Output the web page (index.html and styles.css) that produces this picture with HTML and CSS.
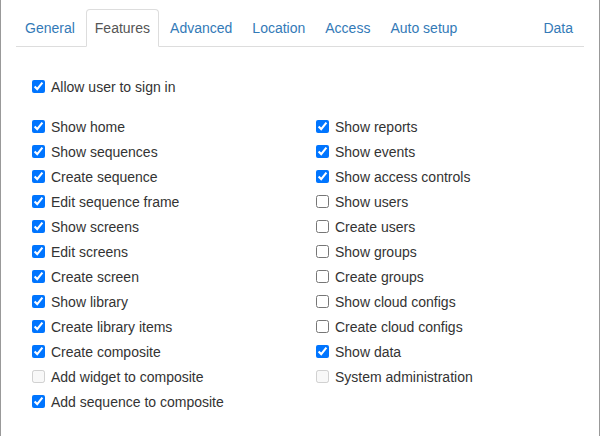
FILE: index.html
```html
<!DOCTYPE html>
<html>
<head>
<meta charset="utf-8">
<link rel="stylesheet" href="styles.css">
</head>
<body>
<div class="frame">
  <ul class="tabs">
    <li class="tab"><a href="#">General</a></li>
    <li class="tab active"><a href="#">Features</a></li>
    <li class="tab"><a href="#">Advanced</a></li>
    <li class="tab"><a href="#">Location</a></li>
    <li class="tab"><a href="#">Access</a></li>
    <li class="tab"><a href="#">Auto setup</a></li>
    <li class="tab tab-right"><a href="#">Data</a></li>
  </ul>
  <div class="content">
    <label class="row top-row"><input type="checkbox" checked><span>Allow user to sign in</span></label>
    <div class="grid">
      <div class="col">
        <label class="row"><input type="checkbox" checked><span>Show home</span></label>
        <label class="row"><input type="checkbox" checked><span>Show sequences</span></label>
        <label class="row"><input type="checkbox" checked><span>Create sequence</span></label>
        <label class="row"><input type="checkbox" checked><span>Edit sequence frame</span></label>
        <label class="row"><input type="checkbox" checked><span>Show screens</span></label>
        <label class="row"><input type="checkbox" checked><span>Edit screens</span></label>
        <label class="row"><input type="checkbox" checked><span>Create screen</span></label>
        <label class="row"><input type="checkbox" checked><span>Show library</span></label>
        <label class="row"><input type="checkbox" checked><span>Create library items</span></label>
        <label class="row"><input type="checkbox" checked><span>Create composite</span></label>
        <label class="row"><input type="checkbox" disabled><span>Add widget to composite</span></label>
        <label class="row"><input type="checkbox" checked><span>Add sequence to composite</span></label>
      </div>
      <div class="col">
        <label class="row"><input type="checkbox" checked><span>Show reports</span></label>
        <label class="row"><input type="checkbox" checked><span>Show events</span></label>
        <label class="row"><input type="checkbox" checked><span>Show access controls</span></label>
        <label class="row"><input type="checkbox"><span>Show users</span></label>
        <label class="row"><input type="checkbox"><span>Create users</span></label>
        <label class="row"><input type="checkbox"><span>Show groups</span></label>
        <label class="row"><input type="checkbox"><span>Create groups</span></label>
        <label class="row"><input type="checkbox"><span>Show cloud configs</span></label>
        <label class="row"><input type="checkbox"><span>Create cloud configs</span></label>
        <label class="row"><input type="checkbox" checked><span>Show data</span></label>
        <label class="row"><input type="checkbox" disabled><span>System administration</span></label>
      </div>
    </div>
  </div>
</div>
</body>
</html>
```
FILE: styles.css
```css
html, body {
  margin: 0;
  padding: 0;
  background: #fff;
}
body {
  font-family: "Liberation Sans", Arial, sans-serif;
  font-size: 14px;
  line-height: 20px;
  color: #333;
}
.frame {
  box-sizing: border-box;
  width: 600px;
  height: 436px;
  border-left: 1px solid #999;
  border-right: 1px solid #999;
  padding: 9px 15px 0 15px;
  overflow: hidden;
}
.tabs {
  list-style: none;
  margin: 0;
  padding: 0;
  display: flex;
  border-bottom: 1px solid #ddd;
}
.tab {
  margin-bottom: -1px;
  margin-right: 2px;
}
.tab a {
  display: block;
  padding: 8px 8px;
  border: 1px solid transparent;
  border-radius: 4px 4px 0 0;
  color: #337ab7;
  text-decoration: none;
}
.tab.active a {
  color: #555;
  background: #fff;
  border-color: #ddd;
  border-bottom-color: transparent;
}
.tab-right {
  margin-left: auto;
  margin-right: 2px;
}
.content {
  padding-top: 27px;
}
.row {
  display: flex;
  align-items: center;
  height: 25px;
  padding-left: 16px;
}
.row input {
  width: 13px;
  height: 13px;
  margin: 0 6px 0 0;
  flex: none;
}
.top-row {
  margin-bottom: 15px;
}
.grid {
  display: grid;
  grid-template-columns: 284px 284px;
}
```
